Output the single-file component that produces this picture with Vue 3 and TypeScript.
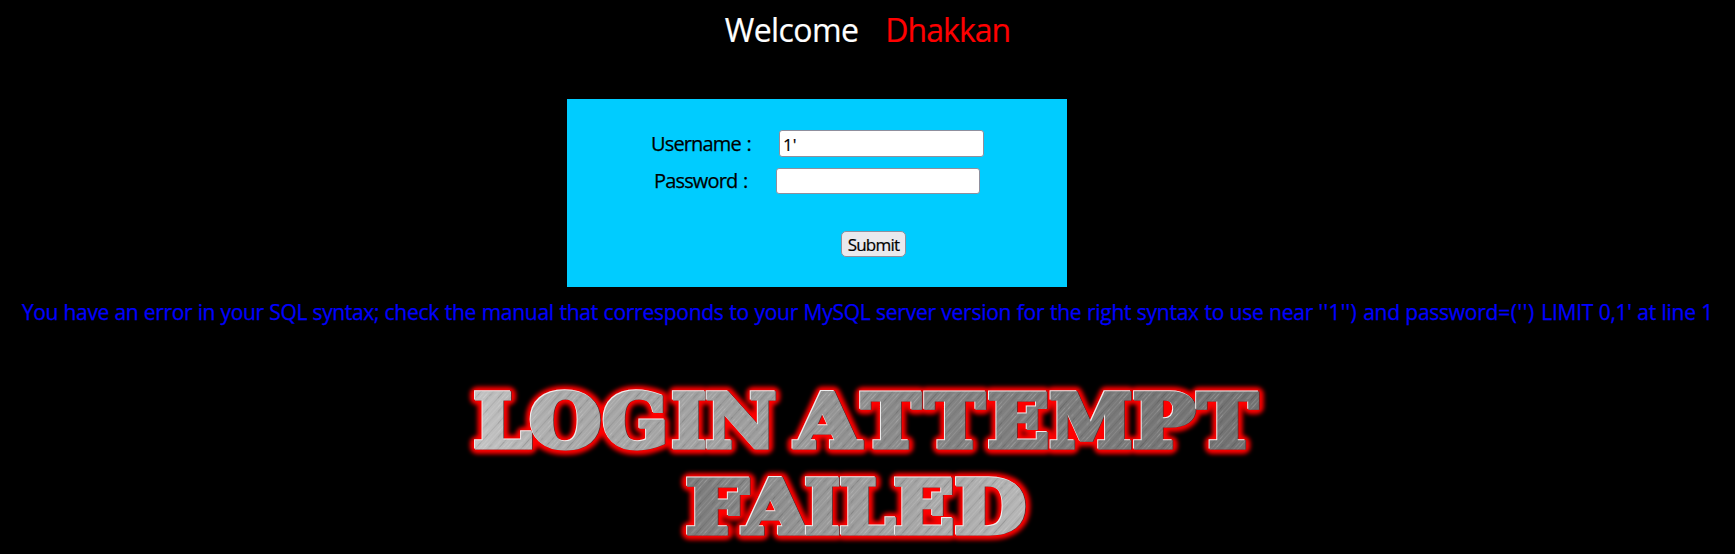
<script setup lang="ts">
import { ref } from 'vue'

interface Glyph {
  ch: string
  x: number
  w: number
}

interface BannerLine {
  id: string
  y: number
  fill: string
  glyphs: Glyph[]
}

const username = ref("1'")
const password = ref('')
const message = [
  { kind: 'lead', text: 'You have an error in your SQL syntax; ' },
  {
    kind: 'body',
    text: 'check the manual that corresponds to your MySQL server version for the right syntax to use near ',
  },
  { kind: 'quote', text: "''1'') " },
  { kind: 'body', text: 'and password' },
  { kind: 'equals', text: "=('') " },
  { kind: 'body', text: "LIMIT 0,1' at line 1" },
]

const place = (text: string, spans: [number, number][]): Glyph[] =>
  [...text].map((ch, i) => ({ ch, x: spans[i][0], w: spans[i][1] - spans[i][0] }))

const lines: BannerLine[] = [
  {
    id: 'top',
    y: 76.5,
    fill: 'url(#steel-top)',
    glyphs: place('LOGINATTEMPT', [
      [12, 69], [68, 139], [141, 206], [210, 244], [244, 314], [334, 398],
      [400, 458], [464, 522], [526, 587], [588, 670], [671, 733], [736, 795],
    ]),
  },
  {
    id: 'bottom',
    y: 162.5,
    fill: 'url(#steel-bottom)',
    glyphs: place('FAILED', [[224, 286], [282, 346], [343, 378], [378, 433], [432, 492], [493, 564]]),
  },
]

const layers = ['shade', 'shine', 'face', 'grain']
const paint = (layer: string, line: BannerLine): string | undefined =>
  layer === 'face' ? line.fill : layer === 'grain' ? 'url(#brushed)' : undefined
</script>

<template>
  <main class="page">
    <h1 class="welcome"><span class="hello">Welcome</span><span class="name">Dhakkan</span></h1>
    <form class="login" @submit.prevent>
      <label class="row user"><span class="label">Username :</span><input v-model="username" type="text" /></label>
      <label class="row pass"><span class="label">Password :</span><input v-model="password" type="password" /></label>
      <button type="submit">Submit</button>
    </form>
    <p class="error"><span v-for="(m, i) in message" :key="i" :class="m.kind">{{ m.text }}</span></p>
    <svg class="banner" width="812" height="184" viewBox="0 0 812 184" role="img" aria-label="Login attempt failed">
      <defs>
        <linearGradient id="steel-top" gradientUnits="userSpaceOnUse" x1="10" y1="70" x2="780" y2="-20">
          <stop offset="0" stop-color="#c4c4c4" />
          <stop offset="0.12" stop-color="#aaa" />
          <stop offset="0.4" stop-color="#9c9c9c" />
          <stop offset="0.62" stop-color="#828282" />
          <stop offset="1" stop-color="#727272" />
        </linearGradient>
        <linearGradient id="steel-bottom" gradientUnits="userSpaceOnUse" x1="220" y1="100" x2="570" y2="165">
          <stop offset="0" stop-color="#787878" />
          <stop offset="0.4" stop-color="#989898" />
          <stop offset="1" stop-color="#b8b8b8" />
        </linearGradient>
        <pattern id="brushed" width="17" height="40" patternUnits="userSpaceOnUse" patternTransform="rotate(42)">
          <rect x="0" width="1" height="40" fill="#fff" opacity="0.11" />
          <rect x="3" width="1.5" height="40" fill="#000" opacity="0.05" />
          <rect x="7" width="2" height="40" fill="#fff" opacity="0.06" />
          <rect x="11" width="1" height="40" fill="#000" opacity="0.08" />
          <rect x="14" width="1" height="40" fill="#fff" opacity="0.08" />
        </pattern>
        <filter id="glow" x="-5%" y="-20%" width="110%" height="140%">
          <feGaussianBlur stdDeviation="1.9" />
        </filter>
      </defs>
      <g class="glow" filter="url(#glow)">
        <template v-for="l in lines" :key="l.id">
          <text
            v-for="g in l.glyphs" :key="g.x" :x="g.x" :y="l.y" :textLength="g.w"
            lengthAdjust="spacingAndGlyphs"
          >{{ g.ch }}</text>
        </template>
      </g>
      <template v-for="l in lines" :key="l.id">
        <g v-for="g in l.glyphs" :key="g.x" class="metal">
          <text
            v-for="layer in layers" :key="layer" :class="layer" :x="g.x" :y="l.y" :textLength="g.w"
            lengthAdjust="spacingAndGlyphs" :fill="paint(layer, l)" :stroke="paint(layer, l)"
          >{{ g.ch }}</text>
        </g>
      </template>
    </svg>
  </main>
</template>

<style>
html,
body {
  margin: 0;
  background: #000;
  overflow: hidden;
}
</style>

<style scoped>
.page {
  height: 554px;
  overflow: hidden;
  background: #000;
  font-family: 'Open Sans', 'Noto Sans', sans-serif;
  display: flex;
  flex-direction: column;
  align-items: center;
}
.welcome {
  display: flex;
  gap: 27px;
  margin: 8px 0 0;
  height: 91px;
  font-size: 32px;
  line-height: 44px;
  font-weight: 400;
  letter-spacing: -0.6px;
  color: #fff;
  -webkit-text-stroke: 0.2px;
}
.name {
  color: #f00;
  letter-spacing: -0.95px;
}
.login {
  box-sizing: border-box;
  width: 500px;
  height: 188px;
  margin-right: 101px;
  padding-top: 31px;
  background: #0cf;
  display: flex;
  flex-direction: column;
  align-items: flex-start;
}
.row {
  display: flex;
  align-items: center;
  font-size: 20px;
  line-height: 27px;
  white-space: nowrap;
}
.user {
  padding-left: 84px;
}
.pass {
  margin-top: 10px;
  padding-left: 87px;
}
.label {
  letter-spacing: -0.85px;
  word-spacing: 1.4px;
  -webkit-text-stroke: 0.25px;
}
.user .label {
  width: 128px;
}
.pass .label {
  width: 122px;
}
input {
  box-sizing: border-box;
  width: 204px;
  height: 26px;
  margin: 0;
  padding: 1px 3px 0;
  border: 1px solid #8f8f9d;
  border-radius: 3px;
  background: #fff;
  color: #000;
  font: 17px 'Open Sans', sans-serif;
  outline: none;
  -webkit-text-stroke: 0.2px;
}
.user input {
  width: 205px;
  height: 27px;
}
button {
  box-sizing: border-box;
  width: 65px;
  height: 26px;
  margin: 37px 0 0 274px;
  padding: 1px 0 0;
  border: 1px solid #8f8f9d;
  border-radius: 5px;
  background: #e9e9ed;
  color: #000;
  font: 17px/23px 'Open Sans', sans-serif;
  letter-spacing: -0.75px;
  -webkit-text-stroke: 0.2px;
}
.error {
  margin: 10px 0 0;
  height: 73px;
  font-size: 21px;
  line-height: 30px;
  letter-spacing: -0.26px;
  word-spacing: 0.4px;
  white-space: pre;
  color: #00f;
  -webkit-text-stroke: 0.25px;
}
.lead {
  letter-spacing: -0.36px;
}
.quote {
  letter-spacing: 0.3px;
}
.equals {
  letter-spacing: 0.6px;
}
.banner {
  flex: none;
  display: block;
  font-family: 'DejaVu Serif', serif;
  font-size: 73px;
  font-weight: 700;
}
.glow text {
  fill: #f00;
  stroke: #f00;
  stroke-width: 14px;
  stroke-linejoin: round;
}
.metal {
  stroke-width: 5px;
}
.shade {
  fill: #5a2a2a;
  stroke: #5a2a2a;
  transform: translate(0.7px, 0.7px);
}
.shine {
  fill: #eee;
  stroke: #eee;
  transform: translate(-0.9px, -0.9px);
}
</style>
